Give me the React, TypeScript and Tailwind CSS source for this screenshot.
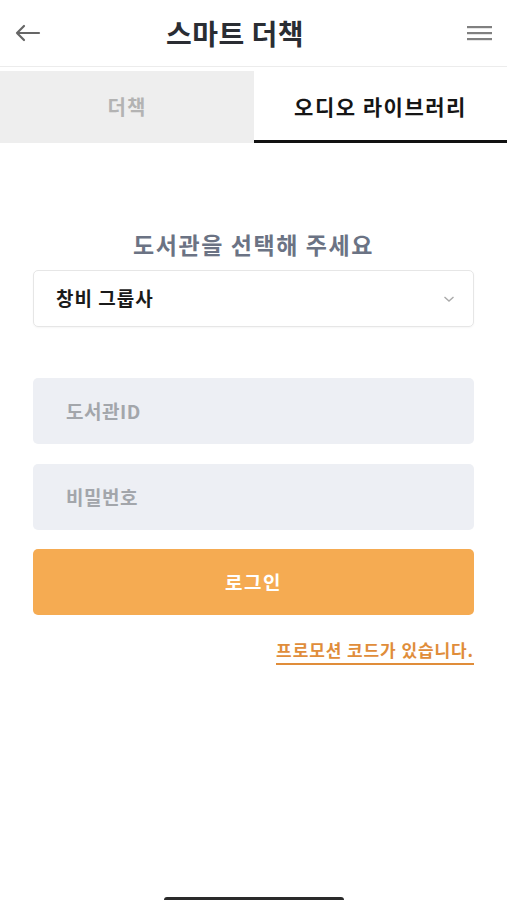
import React from "react";

const font = { fontFamily: '"Noto Sans CJK KR", "Noto Sans", sans-serif' };

export default function App() {
  return (
    <div className="w-[507px] h-[900px] bg-white relative overflow-hidden" style={font}>
      {/* Header */}
      <div className="h-[67px] flex items-center justify-between px-[15px] border-b border-[#ececec]">
        <svg width="26" height="18" viewBox="0 0 26 18" fill="none" stroke="#666" strokeWidth="2.2" strokeLinecap="round" strokeLinejoin="round">
          <path d="M24 9H2M9 2L2 9l7 7" />
        </svg>
        <div className="text-[28px] font-bold text-[#2a2d33] tracking-[0.5px] leading-none mr-[34px]">스마트 더책</div>
        <svg width="32" height="18" viewBox="0 0 32 18" className="mr-[-3px]">
          <rect x="4" y="2" width="25" height="2.2" fill="#808080" />
          <rect x="4" y="8" width="25" height="2.2" fill="#808080" />
          <rect x="4" y="14" width="25" height="2.2" fill="#808080" />
        </svg>
      </div>
      {/* Tabs */}
      <div className="flex mt-[4px] h-[72px]">
        <div className="w-[254px] bg-[#eeeeee] flex items-center justify-center text-[20px] font-bold text-[#b3b3b3] tracking-[1px]">더책</div>
        <div className="flex-1 flex items-center justify-center text-[21px] font-bold text-[#151515] border-b-[3px] border-[#111] pt-[3px] tracking-[1.5px]">오디오 라이브러리</div>
      </div>
      {/* Form */}
      <div className="px-[33px]">
        <div className="mt-[90px] text-center text-[23px] font-bold text-[#6b7384] leading-none tracking-[1.6px]">도서관을 선택해 주세요</div>
        <div className="mt-[14px] h-[57px] border border-[#e6e6e6] rounded-[5px] flex items-center justify-between pl-[22px] pr-[18px] shadow-[0_1px_2px_rgba(0,0,0,0.04)]">
          <span className="text-[19px] font-bold text-[#1a1a1a] tracking-[1px]">창비 그룹사</span>
          <svg width="12" height="8" viewBox="0 0 12 8" fill="none" stroke="#aaa" strokeWidth="1.4">
            <path d="M1.5 2l4.5 4 4.5-4" />
          </svg>
        </div>
        <div className="mt-[51px] h-[66px] bg-[#edeff4] rounded-[5px] flex items-center pl-[33px] text-[19px] font-bold text-[#a3a6ab] tracking-[0.5px]">도서관ID</div>
        <div className="mt-[20px] h-[66px] bg-[#edeff4] rounded-[5px] flex items-center pl-[33px] text-[19px] font-bold text-[#a3a6ab] tracking-[0.5px]">비밀번호</div>
        <div className="mt-[19px] h-[66px] bg-[#f5ab52] rounded-[5px] flex items-center justify-center text-[19px] font-bold text-white tracking-[1.5px]">로그인</div>
        <div className="mt-[23px] flex justify-end">
          <span className="text-[17px] font-bold text-[#e08d3a] border-b-2 border-[#e08d3a] pb-[1px] leading-[24px] tracking-[0.9px]">프로모션 코드가 있습니다.</span>
        </div>
      </div>
      {/* Home indicator */}
      <div className="absolute left-[164px] top-[897px] w-[180px] h-[6px] rounded-full bg-[#2a2a2a]" />
    </div>
  );
}
